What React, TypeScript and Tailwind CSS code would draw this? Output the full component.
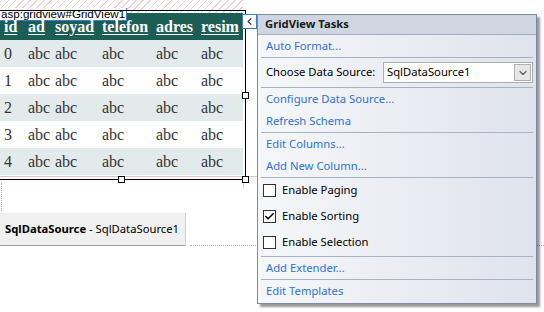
import { Check, ChevronDown, ChevronLeft } from "lucide-react";

const columns = [
  { key: "id", width: "w-[24px]" },
  { key: "ad", width: "w-[27px]" },
  { key: "soyad", width: "w-[47px]" },
  { key: "telefon", width: "w-[54px]" },
  { key: "adres", width: "w-[45px]" },
  { key: "resim", width: "w-[46px]" },
];

const rows = [0, 1, 2, 3, 4];

function Handle({ className }: { className: string }) {
  return <div className={`absolute h-[7px] w-[7px] border border-black bg-white ${className}`} />;
}

function Separator() {
  return <div className="mx-[3px] h-px bg-[#a9b2c4]" />;
}

function TaskLink({ label, h = "h-[22px]" }: { label: string; h?: string }) {
  return (
    <div className={`flex ${h} items-center pl-[8px] text-[#2e73d3]`}>
      <span>{label}</span>
    </div>
  );
}

function TaskCheck({ label, checked, h }: { label: string; checked?: boolean; h: string }) {
  return (
    <div className={`flex ${h} items-center pl-[5px]`}>
      <div className="flex h-[13px] w-[13px] items-center justify-center border border-[#333] bg-white">
        {checked && <Check size={11} strokeWidth={3.5} className="text-black" />}
      </div>
      <span className="ml-[6px] text-black">{label}</span>
    </div>
  );
}

export default function App() {
  return (
    <div className="relative h-[312px] w-[544px] overflow-hidden bg-white">
      {/* design surface outlines */}
      <div className="absolute left-[190px] top-[245px] w-[354px] border-t border-dotted border-[#b8b8b8]" />
      <div className="absolute left-[1px] top-[183px] h-[28px] border-l border-dotted border-[#b8b8b8]" />
      <div className="absolute left-[243px] top-[176px] h-[12px] border-l border-[#e3c4c4]" />
      <div className="absolute left-0 top-[176px] w-[257px] border-t border-[#e3c4c4]" />

      <div className="flex">
        {/* left: grid view on the design surface */}
        <div className="w-[257px] shrink-0">
          <div className="h-[13px] w-[243px] bg-[repeating-linear-gradient(-45deg,#ffffff_0px,#ffffff_4px,#efd3d3_4px,#efd3d3_5px)]">
            <div className="inline-block h-[13px] whitespace-nowrap border-b border-r border-[#3c78c8] bg-white pl-[1px] pr-[1px] font-['Liberation_Sans',sans-serif] text-[11.6px] leading-[12px] text-black">
              asp:gridview#GridView1
            </div>
          </div>

          <table className="w-[243px] table-fixed border-collapse font-['Liberation_Serif',serif] text-[16px]">
            <thead>
              <tr className="h-[27px] bg-[#1c5e55] text-left text-white">
                {columns.map((c) => (
                  <th key={c.key} className={`${c.width} p-0 pl-[4px] font-bold underline underline-offset-[2px]`}>
                    {c.key}
                  </th>
                ))}
              </tr>
            </thead>
            <tbody>
              {rows.map((r) => (
                <tr key={r} className={`h-[27px] text-[#333333] ${r % 2 === 0 ? "bg-[#e3eaeb]" : "bg-white"}`}>
                  <td className="p-0 pl-[4px]">{r}</td>
                  {columns.slice(1).map((c) => (
                    <td key={c.key} className="p-0 pl-[4px]">
                      abc
                    </td>
                  ))}
                </tr>
              ))}
            </tbody>
          </table>

          <div className="mt-[38px] flex h-[33px] w-[186px] items-center whitespace-nowrap border-b border-r border-b-[#a0a0a0] border-r-[#d0d0d0] bg-[#f0f0f0] pl-[5px] font-['Noto_Sans',sans-serif] text-[11.25px] text-black">
            <span className="font-bold">SqlDataSource</span>
            <span>&nbsp;- SqlDataSource1</span>
          </div>
        </div>

        {/* right: smart tag panel */}
        <div className="relative mt-[14px] w-[280px] shrink-0 border border-[#7f8ba0] bg-[linear-gradient(90deg,#f6f7fa,#dfe3ec)] font-['Noto_Sans',sans-serif] text-[11.25px] shadow-[3px_3px_2px_rgba(0,0,0,0.4)]">
          <div className="flex h-[20px] items-center border-b border-[#a4adbf] bg-[#cfd5e1] pl-[7px] font-bold text-[#1a1a1a]">
            GridView Tasks
          </div>
          <TaskLink label="Auto Format..." />
          <Separator />
          <div className="flex h-[29px] items-center pl-[8px]">
            <span className="w-[117px] text-black">Choose Data Source:</span>
            <div className="flex h-[21px] w-[150px] items-center justify-between border border-[#abadb3] bg-white pl-[3px] pr-[1px] text-black">
              <span>SqlDataSource1</span>
              <div className="flex h-[17px] w-[17px] items-center justify-center border border-[#b0b0b0] bg-[#e6e6e6]">
                <ChevronDown size={12} strokeWidth={2.5} className="text-[#606060]" />
              </div>
            </div>
          </div>
          <Separator />
          <TaskLink label="Configure Data Source..." />
          <TaskLink label="Refresh Schema" />
          <Separator />
          <TaskLink label="Edit Columns..." />
          <TaskLink label="Add New Column..." />
          <Separator />
          <TaskCheck label="Enable Paging" h="h-[25px]" />
          <TaskCheck label="Enable Sorting" checked h="h-[26px]" />
          <TaskCheck label="Enable Selection" h="h-[27px]" />
          <Separator />
          <TaskLink label="Add Extender..." />
          <Separator />
          <TaskLink label="Edit Templates" h="h-[23px]" />
        </div>
      </div>

      {/* selection adorner around the grid */}
      <div className="absolute left-[-1px] top-[10px] h-[170px] w-[247px] border border-black" />
      <Handle className="left-[242px] top-[92px]" />
      <Handle className="left-[242px] top-[176px]" />
      <Handle className="left-[118px] top-[176px]" />

      {/* smart tag toggle */}
      <div className="absolute left-[242px] top-[14px] flex h-[15px] w-[15px] items-center justify-center border border-[#3c78c8] bg-white">
        <ChevronLeft size={11} strokeWidth={2.5} className="text-[#333]" />
      </div>
    </div>
  );
}
